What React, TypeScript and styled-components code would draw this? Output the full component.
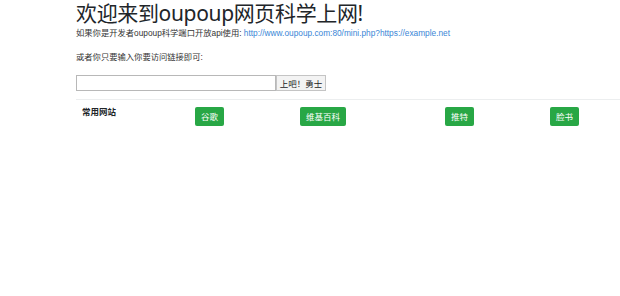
import React from "react";
import styled, { createGlobalStyle } from "styled-components";

const Global = createGlobalStyle`
  html, body { margin: 0; padding: 0; background: #fff; }
  body {
    font-family: "Liberation Sans", "Noto Sans CJK SC", sans-serif;
    color: #212529;
  }
`;

const Page = styled.div`
  padding: 0 0 0 76px;
  width: 544px;
`;

const Title = styled.h1`
  margin: 0;
  font-family: "Noto Sans", "Noto Sans CJK SC", sans-serif;
  font-weight: 400;
  font-size: 21px;
  line-height: 26px;
  color: #212529;
  letter-spacing: -0.35px;
`;

const Para = styled.p<{ $mt: number }>`
  margin: ${(p) => p.$mt}px 0 0;
  font-size: 8.3px;
  line-height: 12px;
  color: #333;
`;

const Link = styled.a`
  color: #3a86d6;
  text-decoration: none;
`;

const Form = styled.form`
  display: flex;
  margin-top: 12px;
`;

const Input = styled.input`
  box-sizing: border-box;
  width: 200px;
  height: 16px;
  margin: 0;
  border: 1px solid #b8b8b8;
  padding: 0 3px;
  font-size: 9px;
`;

const Submit = styled.button`
  box-sizing: border-box;
  width: 50px;
  height: 16px;
  margin: 0;
  padding: 0;
  border: 1px solid #c4c4c4;
  background: #f3f3f3;
  font-family: "Noto Sans CJK SC", sans-serif;
  font-size: 8.5px;
  color: #222;
`;

const Table = styled.div`
  margin-top: 8px;
  border-top: 1px solid #eceeef;
  display: grid;
  grid-template-columns: 113px 105px 145px 105px 1fr;
`;

const Cell = styled.div`
  padding: 6px 6px 0;
`;

const HeadCell = styled(Cell)`
  font-weight: 700;
  font-size: 8.5px;
  line-height: 12px;
  padding-top: 6px;
  color: #212529;
`;

const Btn = styled.a`
  display: inline-flex;
  align-items: center;
  justify-content: center;
  height: 19px;
  padding: 0 6px;
  border-radius: 2px;
  background: #28a745;
  color: #fff;
  font-size: 8.5px;
  text-decoration: none;
`;

const sites = ["谷歌", "维基百科", "推特", "脸书"];

export default function App() {
  return (
    <>
      <Global />
      <Page>
        <Title>欢迎来到oupoup网页科学上网!</Title>
        <Para $mt={1}>
          如果你是开发者oupoup科学端口开放api使用:{" "}
          <Link href="#">http://www.oupoup.com:80/mini.php?https://example.net</Link>
        </Para>
        <Para $mt={12}>或者你只要输入你要访问链接即可:</Para>
        <Form onSubmit={(e) => e.preventDefault()}>
          <Input type="text" />
          <Submit type="submit">上吧！勇士</Submit>
        </Form>
        <Table>
          <HeadCell>常用网站</HeadCell>
          {sites.map((s) => (
            <Cell key={s}>
              <Btn href="#">{s}</Btn>
            </Cell>
          ))}
        </Table>
      </Page>
    </>
  );
}
